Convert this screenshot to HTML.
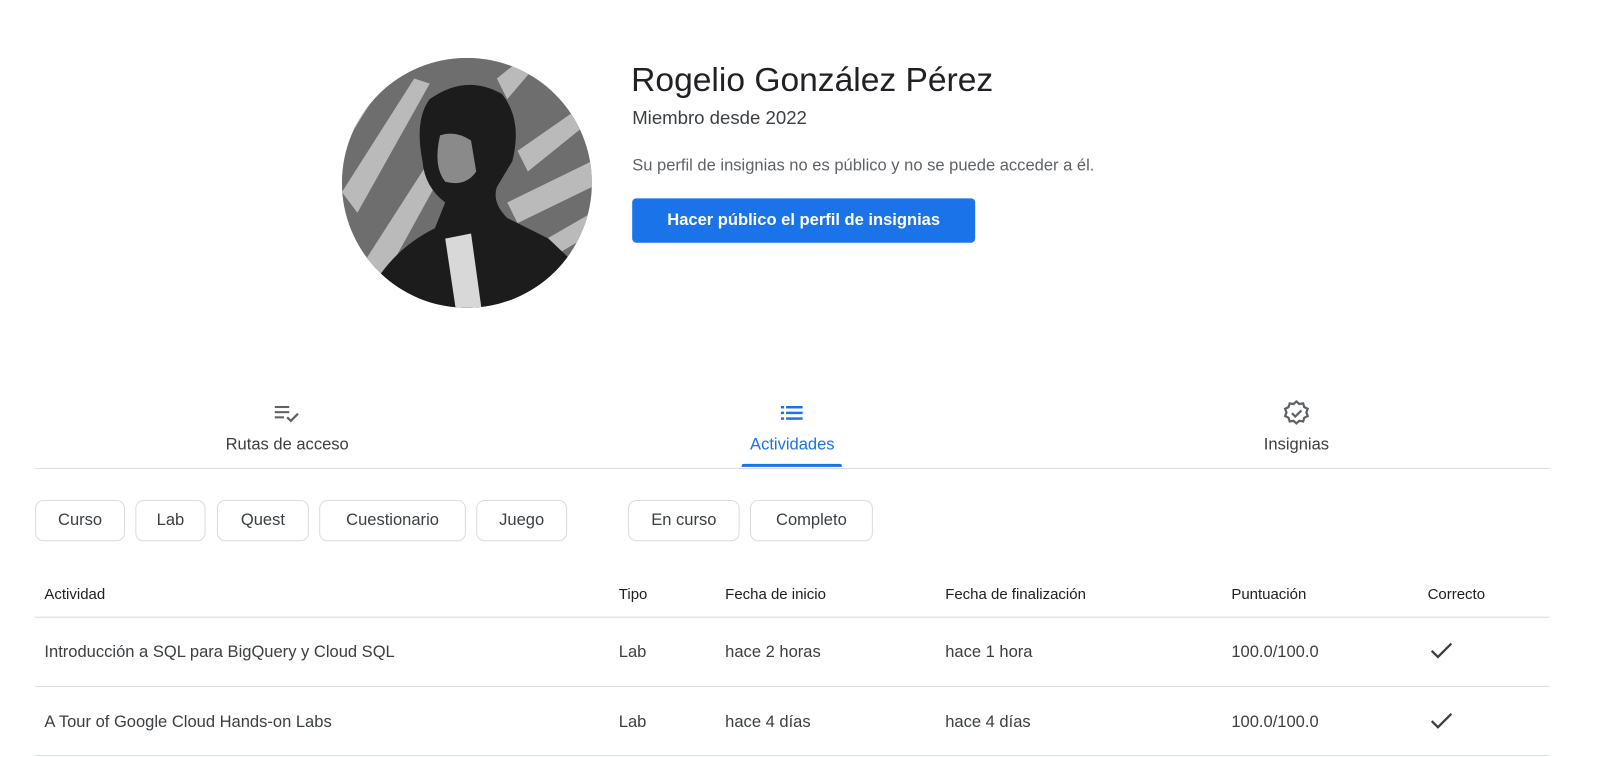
<!DOCTYPE html>
<html><head><meta charset="utf-8">
<style>
html,body{margin:0;padding:0;background:#fff;overflow:hidden;width:1620px;height:757px}
#w{position:absolute;left:0;top:0;width:1563px;height:731px;transform:scale(1.033);transform-origin:0 0;font-family:"Liberation Sans",Arial,sans-serif;color:#202124}
.a{position:absolute;white-space:nowrap}
.chip{position:absolute;top:484px;border:1px solid #dadce0;border-radius:8px;font-size:16px;color:#3c4043;display:flex;align-items:center;justify-content:center;box-sizing:border-box;height:40px}
.h{position:absolute;top:568px;font-size:14.5px;color:#202124}
.c{position:absolute;font-size:16px;color:#3c4043}
.ln{position:absolute;left:34px;width:1466px;height:1px;background:#dadce0}
</style></head><body><div id="w">
<svg class="a" style="left:331px;top:56px" width="242" height="242" viewBox="0 0 242 242">
<defs><clipPath id="cc"><circle cx="121" cy="121" r="121"/></clipPath></defs>
<g clip-path="url(#cc)">
<rect width="242" height="242" fill="#6e6e6e"/>
<g fill="#c8c8c8" opacity="0.85">
<path d="M0 130 L70 20 L85 25 L15 150Z"/>
<path d="M20 200 L110 60 L120 70 L40 215Z"/>
<path d="M150 20 L175 0 L190 5 L160 40Z"/>
<path d="M170 90 L242 40 L242 60 L180 110Z"/>
<path d="M160 140 L242 100 L242 125 L170 160Z"/>
<path d="M190 180 L242 150 L242 170 L200 195Z"/>
<path d="M0 60 L40 0 L55 0 L5 80Z"/>
</g>
<path d="M85 40 Q120 15 155 35 Q175 60 165 100 L150 125 Q145 140 160 155 L200 175 L242 215 L242 242 L20 242 Q40 190 90 165 L100 140 Q80 125 78 100 Q70 60 85 40Z" fill="#1c1c1c"/>
<path d="M95 75 Q110 70 125 80 L130 110 Q120 125 100 120 Q88 105 95 75Z" fill="#8a8a8a"/>
<path d="M100 175 L125 170 L135 242 L110 242Z" fill="#d8d8d8"/>
</g></svg>
<div class="a" style="left:611px;top:59px;font-size:32.5px;color:#202124">Rogelio González Pérez</div>
<div class="a" style="left:612px;top:104px;font-size:18px;color:#3c4043">Miembro desde 2022</div>
<div class="a" style="left:612px;top:152px;font-size:16px;color:#5f6368">Su perfil de insignias no es público y no se puede acceder a él.</div>
<div class="a" style="left:612px;top:192px;width:332px;height:43px;background:#1a73e8;border-radius:4px;color:#fff;font-size:16px;font-weight:bold;display:flex;align-items:center;justify-content:center">Hacer público el perfil de insignias</div>

<svg class="a" style="left:265px;top:391px" width="26" height="20" viewBox="0 0 26 20"><g fill="#5f6368"><rect x="1" y="2" width="14" height="2"/><rect x="1" y="7" width="14" height="2"/><rect x="1" y="12" width="9" height="2"/></g><path d="M13 13 l3.5 3.5 l7 -7" stroke="#5f6368" stroke-width="2.2" fill="none"/></svg>
<div class="a" style="left:178px;top:422px;width:200px;text-align:center;font-size:16px;color:#3c4043">Rutas de acceso</div>
<svg class="a" style="left:755px;top:392px" width="24" height="16" viewBox="0 0 24 16"><g fill="#1a73e8"><rect x="1" y="1" width="3" height="2.4"/><rect x="6" y="1" width="16" height="2.4"/><rect x="1" y="6.5" width="3" height="2.4"/><rect x="6" y="6.5" width="16" height="2.4"/><rect x="1" y="12" width="3" height="2.4"/><rect x="6" y="12" width="16" height="2.4"/></g></svg>
<div class="a" style="left:667px;top:422px;width:200px;text-align:center;font-size:16px;color:#1a73e8">Actividades</div>
<div class="a" style="left:718px;top:449px;width:97px;height:3px;background:#1a73e8;border-radius:2px 2px 0 0"></div>
<svg class="a" style="left:1242px;top:387px" width="26" height="26" viewBox="0 0 24 24"><path d="M12 1.5 l2.6 2.3 3.4-.6 1 3.3 3.1 1.6-1.2 3.2 1.2 3.3-3.1 1.5-1 3.3-3.4-.6-2.6 2.3-2.6-2.3-3.4.6-1-3.3-3.1-1.5 1.2-3.3-1.2-3.2 3.1-1.6 1-3.3 3.4.6Z" fill="none" stroke="#5f6368" stroke-width="2"/><path d="M8 12 l3 3 l5.5-5.5" fill="none" stroke="#5f6368" stroke-width="2"/></svg>
<div class="a" style="left:1155px;top:422px;width:200px;text-align:center;font-size:16px;color:#3c4043">Insignias</div>
<div class="ln" style="top:453px"></div>

<div class="chip" style="left:34px;width:87px">Curso</div>
<div class="chip" style="left:131px;width:68px">Lab</div>
<div class="chip" style="left:210px;width:89px">Quest</div>
<div class="chip" style="left:309px;width:142px">Cuestionario</div>
<div class="chip" style="left:461px;width:88px">Juego</div>
<div class="chip" style="left:608px;width:108px">En curso</div>
<div class="chip" style="left:726px;width:119px">Completo</div>

<div class="h" style="left:43px">Actividad</div>
<div class="h" style="left:599px">Tipo</div>
<div class="h" style="left:702px">Fecha de inicio</div>
<div class="h" style="left:915px">Fecha de finalización</div>
<div class="h" style="left:1192px">Puntuación</div>
<div class="h" style="left:1382px">Correcto</div>
<div class="ln" style="top:597px"></div>

<div class="c" style="left:43px;top:623px">Introducción a SQL para BigQuery y Cloud SQL</div>
<div class="c" style="left:599px;top:623px">Lab</div>
<div class="c" style="left:702px;top:623px">hace 2 horas</div>
<div class="c" style="left:915px;top:623px">hace 1 hora</div>
<div class="c" style="left:1192px;top:623px">100.0/100.0</div>
<svg class="a" style="left:1384px;top:620px" width="24" height="20" viewBox="0 0 24 20"><path d="M2 10 l6 6 l13 -13" stroke="#3c4043" stroke-width="2.2" fill="none"/></svg>
<div class="ln" style="top:664px"></div>

<div class="c" style="left:43px;top:691px">A Tour of Google Cloud Hands-on Labs</div>
<div class="c" style="left:599px;top:691px">Lab</div>
<div class="c" style="left:702px;top:691px">hace 4 días</div>
<div class="c" style="left:915px;top:691px">hace 4 días</div>
<div class="c" style="left:1192px;top:691px">100.0/100.0</div>
<svg class="a" style="left:1384px;top:688px" width="24" height="20" viewBox="0 0 24 20"><path d="M2 10 l6 6 l13 -13" stroke="#3c4043" stroke-width="2.2" fill="none"/></svg>
<div class="ln" style="top:731px"></div>
</div></body></html>
